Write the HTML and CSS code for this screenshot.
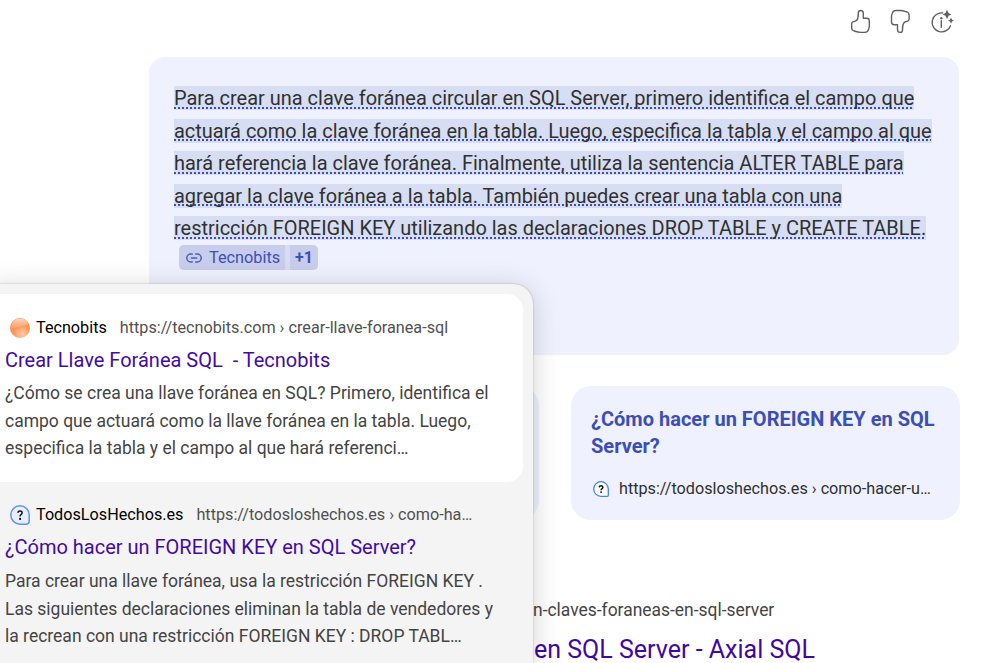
FILE: index.html
```html
<!DOCTYPE html>
<html lang="es">
<head>
<meta charset="utf-8">
<title>Clave foránea en SQL Server</title>
<link rel="stylesheet" href="styles.css">
</head>
<body>
<main class="page">
  <div class="actions">
    <svg class="icon" width="24" height="26" viewBox="0 0 24 26"><path d="M8.6 11.4C10 9.9 10.3 8.2 10.3 5V3.7C10.3 2.3 11.2 1.5 12.7 1.5C14.5 1.5 15.3 2.6 15.3 4.4V9.2H18.6C20.4 9.2 21.3 10.2 21.3 11.9V17.2C21.3 18.2 21 19.2 20.5 20.6C19.8 22.8 18.7 23.4 16.8 23.4H12.8C9.9 23.4 8 22.6 5.4 21.7C4.2 21.2 3.7 20.5 3.7 19.2V14.9C3.7 13.6 4.2 13 5.4 12.6C6.8 12.2 7.6 12.2 8.6 11.4Z"/></svg>
    <svg class="icon" width="24" height="26" viewBox="0 0 24 26"><path d="M8.6 11.4C10 9.9 10.3 8.2 10.3 5V3.7C10.3 2.3 11.2 1.5 12.7 1.5C14.5 1.5 15.3 2.6 15.3 4.4V9.2H18.6C20.4 9.2 21.3 10.2 21.3 11.9V17.2C21.3 18.2 21 19.2 20.5 20.6C19.8 22.8 18.7 23.4 16.8 23.4H12.8C9.9 23.4 8 22.6 5.4 21.7C4.2 21.2 3.7 20.5 3.7 19.2V14.9C3.7 13.6 4.2 13 5.4 12.6C6.8 12.2 7.6 12.2 8.6 11.4Z" transform="rotate(180 11.9 12.45)"/></svg>
    <svg class="icon" width="24" height="26" viewBox="0 0 24 26"><path d="M13.2 4A9.5 9.5 0 1 0 20.7 16.2"/><path d="M11.3 11.2V18.8"/><circle class="solid" cx="11.3" cy="9.2" r="1.2"/><path class="solid" d="M17 .8L18.5 4L21.4 5.4L18.5 6.8L17 10L15.5 6.8L12.6 5.4L15.5 4ZM21 8.6L22 10.7L24 11.6L22 12.5L21 14.7L20 12.5L18 11.6L20 10.7Z"/></svg>
  </div>

  <section class="answer">
    <p class="answer-text"><mark>Para crear una clave foránea circular en SQL Server, primero identifica el campo que<br>actuará como la clave foránea en la tabla. Luego, especifica la tabla y el campo al que<br>hará referencia la clave foránea. Finalmente, utiliza la sentencia ALTER TABLE para<br>agregar la clave foránea a la tabla. También puedes crear una tabla con una<br>restricción FOREIGN KEY utilizando las declaraciones DROP TABLE y CREATE TABLE.</mark></p>
    <div class="citation">
      <span class="cite-source"><svg width="16" height="10" viewBox="0 0 16 10"><path d="M6.8 1H4.8A4 4 0 0 0 4.8 9H6.8M9.2 1H11.2A4 4 0 0 1 11.2 9H9.2M4.8 5H11.2"/></svg>Tecnobits</span>
      <span class="cite-more">+1</span>
    </div>
  </section>

  <div class="cards">
    <article class="card"></article>
    <article class="card">
      <h3>¿Cómo hacer un FOREIGN KEY en SQL<br>Server?</h3>
      <div class="card-url"><svg width="16" height="16" viewBox="0 0 16 16"><path class="ring" d="M8 .7A7.3 7.3 0 1 0 8 15.3H14.3Q15.3 15.3 15.3 14.3V8A7.3 7.3 0 0 0 8 .7Z"/><path class="mark" d="M6.2 6.4Q6.3 4.8 8.1 4.8T9.8 6.4Q9.8 7.2 8.8 7.8Q8.1 8.3 8.1 9.2"/><circle cx="8.1" cy="11.1" r=".9"/></svg><span>https://todosloshechos.es › como-hacer-u…</span></div>
    </article>
  </div>

  <article class="web-result">
    <div class="web-url">n-claves-foraneas-en-sql-server</div>
    <h2>en SQL Server - Axial SQL</h2>
  </article>
</main>

<aside class="popover">
  <article class="source active">
    <header><svg width="20" height="20" viewBox="0 0 20 20"><defs><radialGradient id="base" cx=".6" cy=".8" r=".75"><stop offset="0" stop-color="#ffd0aa"/><stop offset=".5" stop-color="#ff9b61"/><stop offset="1" stop-color="#f5864a"/></radialGradient><linearGradient id="shine" x2="0" y2="1"><stop offset="0" stop-color="#ffdcc4"/><stop offset="1" stop-color="#ffb583" stop-opacity=".3"/></linearGradient></defs><circle cx="10" cy="10" r="10" fill="url(#base)"/><path d="M1.5 6A9.3 9.3 0 0 1 18.5 6Q15 8 10 8.5Q5 9 1.2 11Z" fill="url(#shine)"/></svg><b>Tecnobits</b><span>https://tecnobits.com › crear-llave-foranea-sql</span></header>
    <h4>Crear Llave Foránea SQL &nbsp;- Tecnobits</h4>
    <p>¿Cómo se crea una llave foránea en SQL? Primero, identifica el<br>campo que actuará como la llave foránea en la tabla. Luego,<br>especifica la tabla y el campo al que hará referenci…</p>
  </article>
  <article class="source second">
    <header><svg width="20" height="20" viewBox="0 0 20 20"><path d="M10 .8A9.2 9.2 0 1 0 10 19.2H16.5Q19.2 19 19.2 16V10A9.2 9.2 0 0 0 10 .8Z" fill="#e8eefb" stroke="#5594f8" stroke-width="1.5"/><path class="mark" d="M7.8 7.9Q8 6.1 10 6.1T12.1 7.8Q12.1 8.9 10.9 9.7Q10.1 10.2 10.1 11.4"/><circle cx="10.1" cy="13.9" r="1.1"/></svg><b>TodosLosHechos.es</b><span>https://todosloshechos.es › como-ha…</span></header>
    <h4>¿Cómo hacer un FOREIGN KEY en SQL Server?</h4>
    <p>Para crear una llave foránea, usa la restricción FOREIGN KEY .<br>Las siguientes declaraciones eliminan la tabla de vendedores y<br>la recrean con una restricción FOREIGN KEY : DROP TABL…</p>
  </article>
</aside>
</body>
</html>
```
FILE: styles.css
```css
* { box-sizing: border-box; }
body, h2, h3, h4, p { margin: 0; }
body {
  position: relative;
  height: 663px;
  overflow: hidden;
  background: #fff;
  font-family: Roboto, sans-serif;
  white-space: nowrap;
}
.page { width: 960px; }
.actions {
  display: flex;
  justify-content: flex-end;
  gap: 17px;
  height: 57px;
  padding: 9px 6px 0 0;
}
.icon { fill: none; stroke: #616161; stroke-width: 1.4; stroke-linejoin: round; }
.icon .solid { fill: #616161; stroke: none; }
.answer {
  width: 810px;
  height: 298px;
  margin-left: 149px;
  padding: 25px 25px 0;
  border-radius: 16px;
  background: #eff1fe;
}
.answer-text { font-size: 19.98px; line-height: 32.5px; color: #303030; }
.answer-text mark {
  background: #d7def4;
  color: inherit;
  text-decoration: underline dotted #3b4fb8 2px;
  text-decoration-skip-ink: none;
  text-underline-offset: 2px;
}
.citation {
  display: flex;
  gap: 5px;
  width: 139px;
  height: 25px;
  margin: 0 0 0 5px;
  border-radius: 5px;
  overflow: hidden;
  background: #d7dbf3;
  color: #3c50b5;
  line-height: 25px;
}
.citation span { background: #c8cdec; }
.cite-source { width: 106px; padding-left: 7px; font-size: 16.3px; }
.cite-source svg { margin-right: 7px; fill: none; stroke: #4c5cbb; stroke-width: 1.5; }
.cite-more { width: 28px; padding-left: 5px; font-size: 16px; font-weight: 700; }
.cards { display: flex; justify-content: flex-end; gap: 32px; margin-top: 31px; }
.card {
  flex: 0 0 389px;
  height: 134px;
  padding: 20px;
  border-radius: 20px;
  background: #eff1fe;
}
.card h3 { font-size: 20.03px; line-height: 27px; font-weight: 700; color: #3b4fb5; }
.card-url { display: flex; align-items: center; margin-top: 18px; padding-left: 2px; font-size: 16.2px; line-height: 20px; color: #303030; }
.card-url svg { margin-right: 10px; }
.card-url span { padding-top: 1px; }
.ring { fill: #fff; stroke: #3e83f5; stroke-width: 1.3; }
.mark { fill: none; stroke: #111; stroke-width: 1.5; }
.web-result { margin: 77px 0 0 533px; }
.web-url { font-size: 17.45px; line-height: 26px; color: #444; }
.web-result h2 { padding-left: 1px; margin-top: 10px; font-size: 25px; line-height: 33px; font-weight: 400; color: #4007a2; }
.popover {
  position: absolute;
  left: -10px;
  top: 284px;
  width: 543px;
  height: 379px;
  padding: 10px 10px 0 0;
  border-radius: 0 20px 0 0;
  background: #f4f4f4;
  box-shadow: 0 0 2px rgba(0, 0, 0, .25), 0 4px 28px rgba(0, 0, 0, .18);
}
.source { height: 188px; padding: 23px 0 0 15px; border-radius: 0 16px 16px 0; }
.source.active { background: #fff; }
.source.second { height: 180px; padding-top: 22px; }
.source header { display: flex; align-items: center; height: 22px; padding-left: 5px; font-size: 16.22px; }
.source header svg { margin-right: 6px; }
.source header b { margin-right: 13px; padding-bottom: 2px; font-weight: 400; color: #000; }
.source header span { padding-bottom: 1px; color: #505050; }
.source h4 { margin-top: 8px; font-size: 20px; line-height: 27px; font-weight: 400; color: #430aa5; }
.source p { margin-top: 6px; font-size: 17.5px; line-height: 27.5px; color: #444; }
.source.second p { margin-top: 7px; }
```
